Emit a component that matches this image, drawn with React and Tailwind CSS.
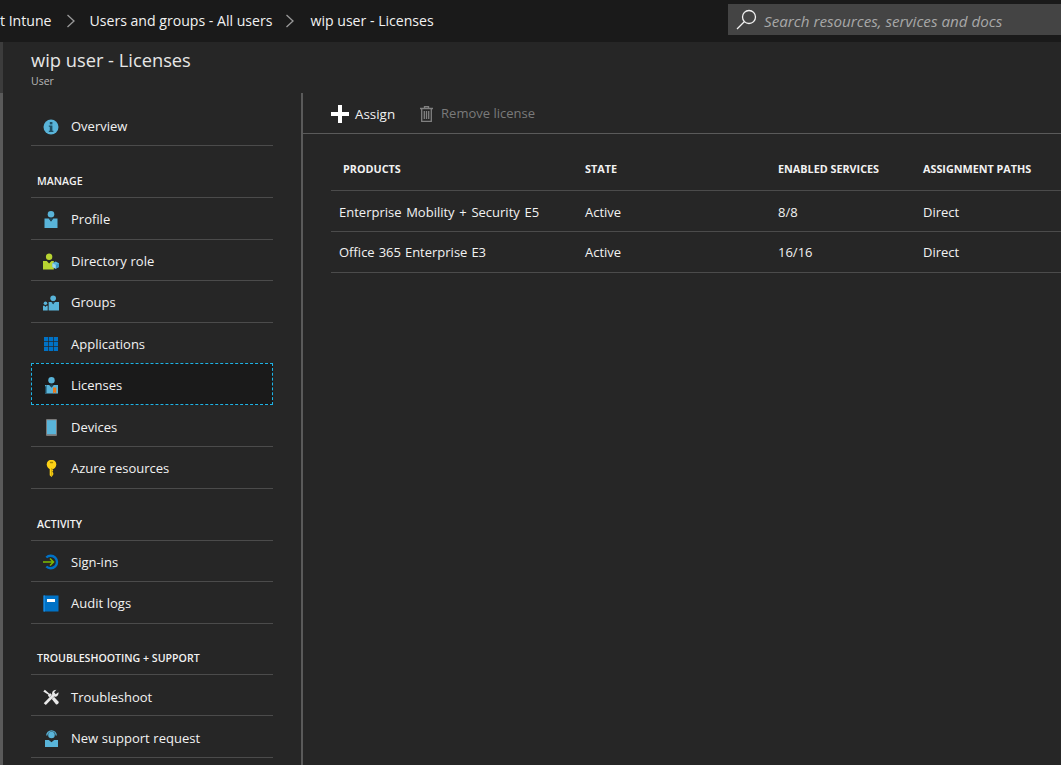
import React from "react";

const Info = () => (
  <svg width="16" height="16" viewBox="0 0 16 16"><circle cx="8" cy="8" r="7.5" fill="#59b4d9"/><rect x="6.800" y="3" width="2.600" height="2.400" fill="#1f4e63"/><path d="M5.800 6.500h3.600v5.200h1v1.300H5.800v-1.300h1V7.800h-1z" fill="#1f4e63"/></svg>
);
const Profile = () => (
  <svg width="14" height="17" viewBox="0 0 14 17">
    <circle cx="7" cy="3.300" r="3.300" fill="#59b4d9" />
    <path d="M1 7.500h3.700L7 10.500l2.300-3H13.500V17H.5V7.500z" fill="#59b4d9" />
    <path d="M5 7.200h4L7 10.600z" fill="#1d4a5e" />
  </svg>
);
const DirRole = () => (
  <svg width="17" height="17" viewBox="0 0 17 17">
    <circle cx="6.500" cy="3.400" r="3.400" fill="#b8d432"/>
    <path d="M0 8h4l2.500 2.600L9 8h2.500v9H0z" fill="#b8d432"/>
    <path d="M13.500 8.500l3.500 1.800v4L13.500 16.300 10 14.300V10.300z" fill="#59b4d9"/>
    <path d="M13.500 12.200L17 10.300v4l-3.500 2z" fill="#3999c6"/>
    <path d="M10 10.300l3.500 1.900v4.100L10 14.300z" fill="#a0d7ea"/>
  </svg>
);
const Groups = () => (
  <svg width="17" height="16" viewBox="0 0 17 16">
    <circle cx="10.800" cy="3" r="3" fill="#59b4d9"/>
    <path d="M6 7h3l1.800 2.400L12.600 7H17v9H6z" fill="#59b4d9"/>
    <path d="M9.400 6.800h2.800l-1.400 2.600z" fill="#1d4a5e"/>
    <circle cx="2.600" cy="8.200" r="1.900" fill="#59b4d9"/>
    <path d="M0 11h1.600l1 1.200 1-1.200H5v5H0z" fill="#59b4d9"/>
  </svg>
);
const Apps = () => (
  <svg width="14" height="14" viewBox="0 0 14 14" fill="#0072c6">
    {[0, 5, 10].flatMap((y) => [0, 5, 10].map((x) => <rect key={x + "-" + y} x={x} y={y} width="4.300" height="4.300" />))}
  </svg>
);
const Licenses = () => (
  <svg width="13" height="17" viewBox="0 0 13 17">
    <circle cx="6.500" cy="3.300" r="3.200" fill="#59b4d9"/>
    <path d="M0 8h4.200l2.300 2.500L8.800 8H13v8.500H0z" fill="#59b4d9"/>
    <path d="M4.800 7.500h3.500l-1.700 3z" fill="#1d4a5e"/>
    <path d="M0 9.500L1.500 8v8.500H0z" fill="#1d4a5e"/>
    <path d="M8 10.500h3.200v6L9.600 15.300 8 16.500z" fill="#e8791c"/>
  </svg>
);
const Device = () => (
  <svg width="11" height="17" viewBox="0 0 11 17"><rect width="11" height="17" rx="1" fill="#7a7a7a"/><rect x="1" y="1.200" width="9" height="14" fill="#59b4d9"/></svg>
);
const Key = () => (
  <svg width="11" height="17" viewBox="0 0 11 17">
    <circle cx="5.500" cy="4.500" r="4.800" fill="#fcd116"/>
    <path d="M3.700 7h3.600v1.500l-1 1 1 1-1 1 1 1.500v1.500L5.500 17 3.700 15.200z" fill="#fcd116"/>
    <rect x="3.800" y="1.800" width="3.400" height="1.500" rx="0.700" fill="#a58700"/>
    <path d="M5.700 8v8" stroke="#c19c00" strokeWidth="0.800"/>
  </svg>
);
const SignIn = () => (
  <svg width="16" height="16" viewBox="0 0 16 16">
    <path d="M3.300 3.500A6.300 6.300 0 1 1 3.300 12.500" fill="none" stroke="#0072c6" strokeWidth="2.400"/>
    <path d="M0 8h10M7 4.500 10.500 8 7 11.500" fill="none" stroke="#7fba00" strokeWidth="1.500"/>
  </svg>
);
const Audit = () => (
  <svg width="16" height="17" viewBox="0 0 16 17">
    <path d="M0.500 0.500h15v16h-15z" fill="#0072c6"/>
    <rect x="0.500" y="0.500" width="1.500" height="16" fill="#1a8ae0"/>
    <rect x="4" y="4" width="8" height="3" fill="#fff"/>
  </svg>
);
const Tools = () => (
  <svg width="17" height="17" viewBox="0 0 17 17" fill="#e8e8e8">
    <path d="M.8 14.600 9.800 5.200C9.300 3 10.500.3 14.200.2L11.800 3l1.700 2 2.900-2.200c.6 3-1.800 5.300-4.600 4.700L3 16.500z"/>
    <path d="M.3 2 2 .3l4.800 4.300 1 -.5 1.600 1.600L6.800 8.200 5.300 6.700l.5-1zM9.300 10l2.300-2.300 5 5.300c.8 1.200-1.600 3.700-2.900 2.600z"/>
  </svg>
);
const Support = () => (
  <svg width="13" height="17" viewBox="0 0 13 17">
    <circle cx="6.500" cy="5" r="3.300" fill="#59b4d9"/>
    <path d="M1.800 5.500a4.700 4.700 0 0 1 9.400 0" fill="none" stroke="#59b4d9" strokeWidth="1.300"/>
    <path d="M0 10h3.800l2.700 2.300L9.200 10H13v7H0z" fill="#59b4d9"/>
  </svg>
);

const Row = ({ icon, label, active, className = "h-[41.5px] pt-[3px]" }) => (
  <div
    className={
      active
        ? `${className} flex items-center border border-dashed border-[#1eb4e6] bg-[#1a1a1a] pl-[11px] -mt-px mb-px`
        : `${className} flex items-center border-b border-[#4b4b4b] pl-[12px]`
    }
  >
    <span className="flex w-[16px] justify-center">{icon}</span>
    <span className="ml-[12px] text-[13px] [word-spacing:0.3px] text-[#f2f2f2]">{label}</span>
  </div>
);

const Section = ({ label, className }) => (
  <div className={`flex items-end border-b border-[#4b4b4b] pl-[6px] pb-[7px] text-[10.600px] font-semibold text-[#f2f2f2] ${className}`}>
    {label}
  </div>
);

const Chevron = () => (
  <svg width="10" height="14" viewBox="0 0 10 14" fill="none" stroke="#9a9a9a" strokeWidth="1.300"><path d="M1.500 1 8 7l-6.500 6" /></svg>
);

const cols = "grid-cols-[246px_193px_145px_1fr]";

export default function App() {
  return (
    <div className="flex h-[765px] w-full flex-col overflow-hidden bg-[#262626] font-['Open_Sans','Noto_Sans',sans-serif] text-[#f2f2f2]">
      <header className="flex h-[42px] shrink-0 items-center bg-[#1a1a1a] text-[14.100px]">
        <div className="flex items-center">
          <span>t Intune</span>
          <span className="ml-[14px]"><Chevron /></span>
          <span className="ml-[14px]">Users and groups - All users</span>
          <span className="ml-[13px]"><Chevron /></span>
          <span className="ml-[15px]">wip user - Licenses</span>
        </div>
        <div className="ml-auto mt-[4px] flex h-[31px] w-[333px] items-center self-start bg-[#444444]">
          <svg className="ml-[8px]" width="21" height="21" viewBox="0 0 21 21" fill="none" stroke="#f2f2f2" strokeWidth="1.300"><circle cx="13" cy="8" r="6.500" /><path d="M8.500 12.500 1 20" /></svg>
          <span className="ml-[7px] pt-[3px] text-[15.200px] italic text-[#a8a8a8]">Search resources, services and docs</span>
        </div>
      </header>

      <div className="flex min-h-0 flex-1">
        <div className="flex w-[3px] shrink-0 flex-col">
          <div className="h-[51px] bg-[#3c3c3c]" />
          <div className="flex-1 bg-[#5a5a5a]" />
        </div>
        <div className="flex min-w-0 flex-1 flex-col">
          <div className="h-[51px] shrink-0 pl-[28px]">
            <h1 className="pt-[5px] text-[18.300px] leading-[26px] font-normal text-[#e6e6e6]">wip user - Licenses</h1>
            <p className="pt-[1px] text-[10.500px] leading-[14px] text-[#b8b8b8]">User</p>
          </div>
          <div className="flex min-h-0 flex-1">
            <nav className="w-[300px] shrink-0 border-r-2 border-[#5a5a5a] pl-[28px] pr-[28px]">
              <div className="w-[242px]">
                <Row icon={<Info />} label="Overview" className="h-[53px] pt-[16px]" />
                <Section label="MANAGE" className="h-[52px]" />
                <Row icon={<Profile />} label="Profile" />
                <Row icon={<DirRole />} label="Directory role" />
                <Row icon={<Groups />} label="Groups" />
                <Row icon={<Apps />} label="Applications" />
                <Row icon={<Licenses />} label="Licenses" active />
                <Row icon={<Device />} label="Devices" />
                <Row icon={<Key />} label="Azure resources" />
                <Section label="ACTIVITY" className="h-[52px]" />
                <Row icon={<SignIn />} label="Sign-ins" />
                <Row icon={<Audit />} label="Audit logs" />
                <Section label="TROUBLESHOOTING + SUPPORT" className="h-[51px]" />
                <Row icon={<Tools />} label="Troubleshoot" className="h-[41.5px] pt-[5px]" />
                <Row icon={<Support />} label="New support request" className="h-[41.5px] pt-[5px]" />
              </div>
            </nav>
            <main className="min-w-0 flex-1">
              <div className="flex h-[41px] items-center border-b border-[#5a5a5a] pl-[28px] pt-[2px] text-[13px]">
                <svg className="-mt-[1px]" width="18" height="18" viewBox="0 0 18 18" fill="#fff"><path d="M7 0h4v7h7v4h-7v7H7v-7H0V7h7z" /></svg>
                <span className="ml-[6px] text-[13.400px]">Assign</span>
                <svg className="-mt-[1px] ml-[25px]" width="13" height="16" viewBox="0 0 13 16" fill="none" stroke="#808080" strokeWidth="1.300"><path d="M0 2.500h13M4.500 2.500V.7h4v1.800M1.700 2.500V15.300h9.600V2.500M4.300 5v8M6.500 5v8M8.700 5v8" /></svg>
                <span className="ml-[8px] text-[#7a7a7a]">Remove license</span>
              </div>
              <div className="ml-[28px] pt-[15px]">
                <div className="grid h-[42px] grid-cols-[242px_193px_145px_1fr] items-center border-b border-[#4b4b4b] pl-[12px] text-[10.800px] font-bold">
                  <span>PRODUCTS</span>
                  <span>STATE</span>
                  <span>ENABLED SERVICES</span>
                  <span>ASSIGNMENT PATHS</span>
                </div>
                <div className={`grid h-[41px] ${cols} items-center border-b border-[#4b4b4b] pl-[8px] pt-[4px] text-[13px] [word-spacing:0.6px]`}>
                  <span className="[word-spacing:1.300px]">Enterprise Mobility + Security E5</span>
                  <span>Active</span>
                  <span>8/8</span>
                  <span>Direct</span>
                </div>
                <div className={`grid h-[41px] ${cols} items-center border-b border-[#4b4b4b] pl-[8px] pt-[2px] text-[13px] [word-spacing:0.6px]`}>
                  <span>Office 365 Enterprise E3</span>
                  <span>Active</span>
                  <span>16/16</span>
                  <span>Direct</span>
                </div>
              </div>
            </main>
          </div>
        </div>
      </div>
    </div>
  );
}
